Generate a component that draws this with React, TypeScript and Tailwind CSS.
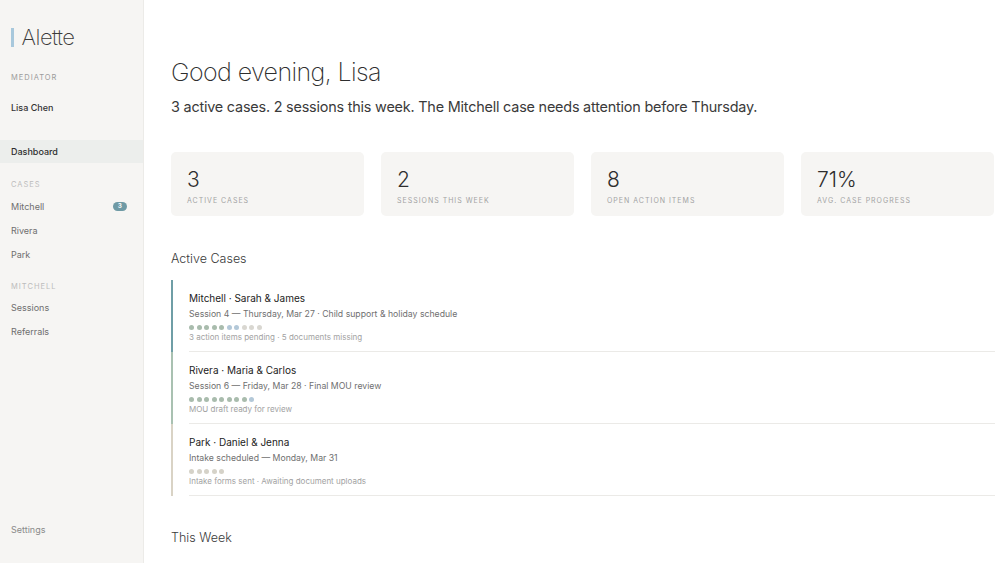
import React from "react";

const font = { fontFamily: "Inter, 'Helvetica Neue', Arial, sans-serif" };

function Dots({ colors }: { colors: string[] }) {
  return (
    <div className="flex gap-[2.5px] h-[6px] items-center">
      {colors.map((c, i) => (
        <span key={i} className="w-[5px] h-[5px] rounded-full" style={{ background: c }} />
      ))}
    </div>
  );
}

const G = "#a9bcad";
const B = "#b3c8d8";
const L = "#d9d7d1";
const P = "#d5d2c8";

function CaseRow({
  border,
  title,
  sub,
  dots,
  meta,
}: {
  border: string;
  title: string;
  sub: string;
  dots: string[];
  meta: string;
}) {
  return (
    <div className={`flex border-l-2 ${border}`}>
      <div className="flex-1 ml-[16px] pt-[11px] h-[72px] border-b border-[#ebeae7]">
        <div className="text-[10px] text-[#222] leading-[14px]">{title}</div>
        <div className="text-[8.7px] text-[#6f6f6f] leading-[12px] mt-[3px]">{sub}</div>
        <div className="mt-[4px]">
          <Dots colors={dots} />
        </div>
        <div className="text-[8px] text-[#a2a2a2] leading-[11px] mt-[2px]">{meta}</div>
      </div>
    </div>
  );
}

export default function App() {
  return (
    <div className="flex w-[1000px] h-[563px] overflow-hidden bg-white" style={font}>
      {/* Sidebar */}
      <aside className="w-[144px] shrink-0 bg-[#f6f5f3] border-r border-[#ecebe8] flex flex-col">
        <div className="flex items-center gap-[8px] pl-[11px] pt-[24px]">
          <span className="w-[2.5px] h-[19px] bg-[#a8c8dc]" />
          <span className="text-[22px] font-extralight text-[#3a3a3a] leading-[26px] tracking-[-0.5px]">Alette</span>
        </div>
        <div className="pl-[11px] mt-[22px] text-[7.5px] tracking-[1px] text-[#9c9c9c]">MEDIATOR</div>
        <div className="pl-[11px] mt-[18px] text-[9px] font-medium text-[#333]">Lisa Chen</div>
        <div className="mt-[25px] h-[23px] bg-[#eceeec] flex items-center pl-[11px] text-[9px] font-medium text-[#2f2f2f]">
          Dashboard
        </div>
        <div className="pl-[11px] mt-[16px] text-[7.5px] tracking-[1px] text-[#bcbcbc]">CASES</div>
        <div className="mt-[10px] pl-[11px] pr-[16px] h-[13px] flex items-center justify-between text-[9px] text-[#6f6f6f]">
          <span>Mitchell</span>
          <span className="h-[9px] px-[5px] rounded-full bg-[#6f9aa5] text-white text-[6.5px] leading-[9px] font-semibold">3</span>
        </div>
        <div className="mt-[11px] pl-[11px] h-[13px] flex items-center text-[9px] text-[#6f6f6f]">Rivera</div>
        <div className="mt-[11px] pl-[11px] h-[13px] flex items-center text-[9px] text-[#6f6f6f]">Park</div>
        <div className="pl-[11px] mt-[20px] text-[7.5px] tracking-[1px] text-[#bcbcbc]">MITCHELL</div>
        <div className="mt-[9px] pl-[11px] h-[13px] flex items-center text-[9px] text-[#6f6f6f]">Sessions</div>
        <div className="mt-[11px] pl-[11px] h-[13px] flex items-center text-[9px] text-[#6f6f6f]">Referrals</div>
        <div className="mt-auto mb-[27px] pl-[11px] text-[9px] text-[#8a8a8a]">Settings</div>
      </aside>

      {/* Main */}
      <main className="flex-1 pl-[27px] pt-[56px] min-w-0">
        <h1 className="text-[25px] font-extralight text-[#2e2e2e] leading-[32px] tracking-[-0.6px]">Good evening, Lisa</h1>
        <p className="mt-[9px] text-[14.4px] text-[#3a3a3a] leading-[20px] tracking-[-0.2px]">
          3 active cases. 2 sessions this week. The Mitchell case needs attention before Thursday.
        </p>

        <div className="mt-[35px] grid grid-cols-4 gap-[17px] w-[823px]">
          {[
            ["3", "ACTIVE CASES"],
            ["2", "SESSIONS THIS WEEK"],
            ["8", "OPEN ACTION ITEMS"],
            ["71%", "AVG. CASE PROGRESS"],
          ].map(([n, l]) => (
            <div key={l} className="h-[64px] rounded-[5px] bg-[#f6f5f3] pl-[16px] pt-[15px]">
              <div className="text-[21px] font-light text-[#2e2e2e] leading-[26px]">{n}</div>
              <div className="mt-[3px] text-[7px] tracking-[1px] text-[#a3a3a3]">{l}</div>
            </div>
          ))}
        </div>

        <h2 className="mt-[34px] text-[12.5px] font-light text-[#3a3a3a] leading-[18px]">Active Cases</h2>

        <div className="mt-[12px] w-[824px]">
          <CaseRow
            border="border-[#6f9ea6]"
            title="Mitchell · Sarah & James"
            sub="Session 4 — Thursday, Mar 27 · Child support & holiday schedule"
            dots={[G, G, G, G, G, B, B, L, L, L]}
            meta="3 action items pending · 5 documents missing"
          />
          <CaseRow
            border="border-[#a9c1b1]"
            title="Rivera · Maria & Carlos"
            sub="Session 6 — Friday, Mar 28 · Final MOU review"
            dots={[G, G, G, G, G, G, G, G, B]}
            meta="MOU draft ready for review"
          />
          <CaseRow
            border="border-[#d9d3c5]"
            title="Park · Daniel & Jenna"
            sub="Intake scheduled — Monday, Mar 31"
            dots={[P, P, P, P, P]}
            meta="Intake forms sent · Awaiting document uploads"
          />
        </div>

        <h2 className="mt-[33px] text-[12.5px] font-light text-[#3a3a3a] leading-[18px]">This Week</h2>
      </main>
    </div>
  );
}
